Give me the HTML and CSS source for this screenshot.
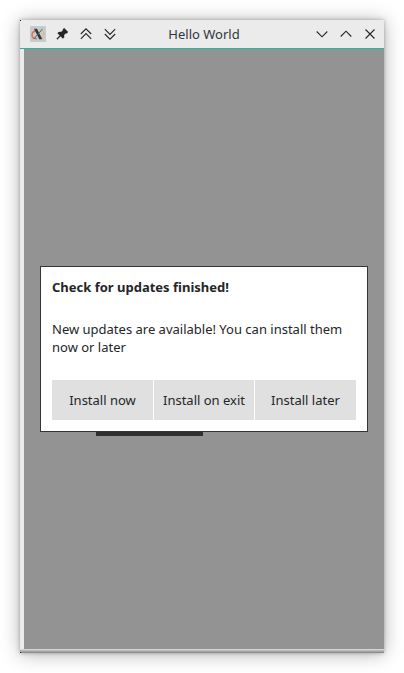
FILE: index.html
```html
<!DOCTYPE html>
<html lang="en">
<head>
<meta charset="utf-8">
<title>Hello World</title>
<link rel="stylesheet" href="styles.css">
</head>
<body>
<main class="window">
  <header class="titlebar">
    <div class="group">
      <svg class="app-icon" width="16" height="16" viewBox="0 0 16 16">
        <rect width="16" height="16" rx=".5" fill="#c3cdd0"/>
        <path d="M5.500 5C3.500 5.400 2 7 2 9c0 2.200 2 3.700 5 3.700" fill="none" stroke="#ee6b3b" stroke-width="1.400"/>
        <path d="M10.500 5c2.200.1 3.700 1.400 3.700 3.300 0 2.500-2.600 4.400-6 4.400" fill="none" stroke="#e5b77c" stroke-width="1.200"/>
        <path d="M4 2.800h3L12.300 13.200H9.300z" fill="#30373b"/>
        <path d="M12.600 2.800L3.600 13.200" stroke="#5b6367" stroke-width="1"/>
      </svg>
      <svg width="16" height="16" viewBox="0 0 16 16">
        <path d="M10.300 2.200l3.700 3.700-1.100 1.400-1-.1-1.900 1.900.1 2.200-1.200 1.200-2.300-2.300L3.300 13.400 2.600 12.700 5.800 9.400 3.600 7.200l1.200-1.300 2.300.2 1.900-1.900-.1-.9z" fill="#232629" stroke="#232629" stroke-width=".3"/>
      </svg>
      <svg class="line" width="16" height="16" viewBox="0 0 16 16"><path d="M2.800 8L8 2.800 13.200 8M2.800 12.800L8 7.600l5.200 5.200"/></svg>
      <svg class="line" width="16" height="16" viewBox="0 0 16 16"><path d="M2.800 3.200L8 8.400l5.200-5.200M2.800 8L8 13.200 13.200 8"/></svg>
    </div>
    <h1 class="title">Hello World</h1>
    <div class="group group-end">
      <svg class="line" width="16" height="16" viewBox="0 0 16 16"><path d="M2.700 5.500L8 10.800l5.300-5.300"/></svg>
      <svg class="line" width="16" height="16" viewBox="0 0 16 16"><path d="M2.700 10.500L8 5.200l5.300 5.300"/></svg>
      <svg class="line" width="16" height="16" viewBox="0 0 16 16"><path d="M3.500 3.500l9 9M12.500 3.500l-9 9"/></svg>
    </div>
  </header>
  <div class="content">
    <div class="covered-button"></div>
    <section class="dialog" role="dialog">
      <h2 class="heading">Check for updates finished!</h2>
      <p class="message">New updates are available! You can install them now or later</p>
      <div class="actions">
        <button class="action">Install now</button>
        <button class="action">Install on exit</button>
        <button class="action">Install later</button>
      </div>
    </section>
  </div>
  <div class="bottom-edge"></div>
</main>
</body>
</html>
```
FILE: styles.css
```css
* {
  box-sizing: border-box;
}

body {
  margin: 0;
  padding: 20px;
  background: #fff;
  color: #232629;
  font-family: "Noto Sans", sans-serif;
  font-size: 13px;
  line-height: 18px;
  overflow: hidden;
}

.window {
  position: relative;
  display: flex;
  flex-direction: column;
  width: 364px;
  height: 633px;
  background: #ebebeb;
  box-shadow: 0 1px 18px rgba(0, 0, 0, 0.3), 0 0 4px rgba(0, 0, 0, 0.28);
}

/* Dark pixels in the left corners of the frame */
.window::before,
.window::after {
  content: "";
  position: absolute;
  left: 0;
  width: 1px;
  height: 1px;
  background: #222;
}

.window::before {
  top: 0;
}

.window::after {
  bottom: 0;
}

.titlebar {
  display: grid;
  grid-template-columns: 1fr auto 1fr;
  align-items: center;
  height: 29px;
  padding: 0 6px 0 10px;
  border-bottom: 1px solid #1abc9c;
}

.group {
  display: flex;
  gap: 8px;
}

.group-end {
  justify-content: flex-end;
}

.line {
  fill: none;
  stroke: #232629;
  stroke-width: 1.1;
}

.title {
  margin: 0;
  color: #31363b;
  font-size: 13px;
  font-weight: 400;
}

.content {
  position: relative;
  display: flex;
  flex: 1;
  align-items: center;
  margin-left: 4px;
  padding: 0 16px;
  background: #939393;
}

.covered-button {
  position: absolute;
  top: 347px;
  left: 72px;
  width: 107px;
  height: 40px;
  background: #303030;
}

.dialog {
  position: relative;
  width: 328px;
  height: 166px;
  padding: 11px;
  border: 1px solid #31363b;
  background: #fff;
}

.heading {
  margin: 0 0 24px;
  font-size: 13px;
  font-weight: 700;
}

.message {
  margin: 0 0 24px;
}

.actions {
  display: grid;
  grid-template-columns: 101px 100px 101px;
  gap: 1px;
}

.action {
  height: 40px;
  padding: 0;
  border: 0;
  background: #e0e0e0;
  color: inherit;
  font: inherit;
  white-space: nowrap;
}

.bottom-edge {
  height: 4px;
  background: linear-gradient(#d5d5d5 25%, #b9b9b9 25% 50%, #a5a5a5 50% 75%, #8d8d8d 75%);
}
```
